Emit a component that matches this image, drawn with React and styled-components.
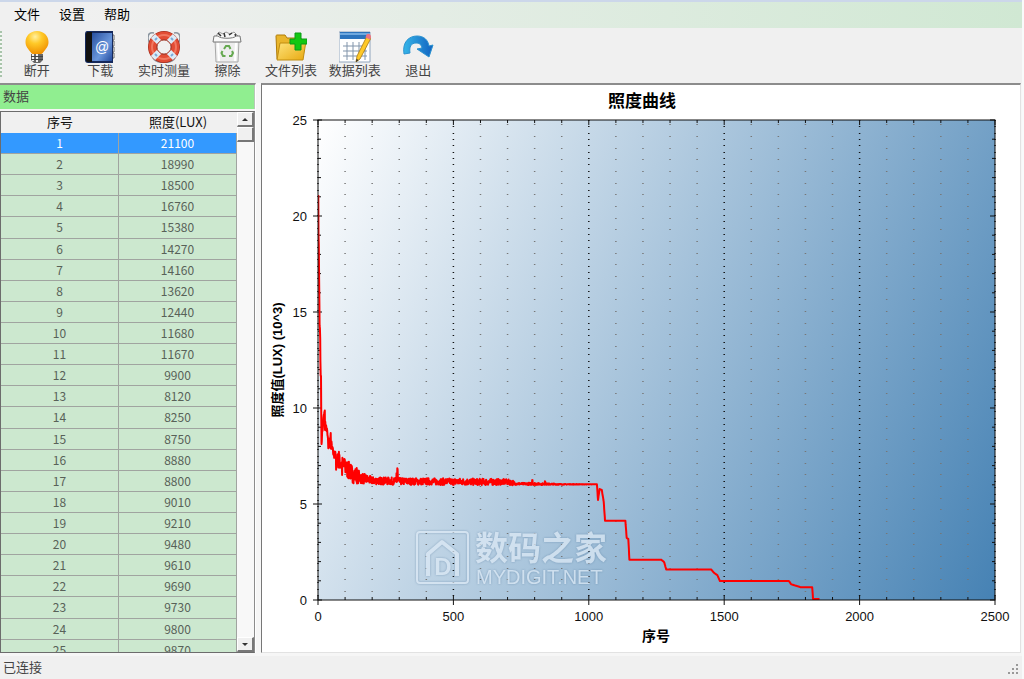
import React, { useState } from 'react';
import styled, { createGlobalStyle } from 'styled-components';

const GlobalStyle = createGlobalStyle`
  * {
    box-sizing: border-box;
  }

  body {
    margin: 0;
    background: #f0f0f0;
    color: #444;
    font-family: "Liberation Sans", "Noto Sans CJK SC", sans-serif;
    font-size: 13px;
  }

  button {
    margin: 0;
    padding: 0;
    border: 0;
    background: none;
    color: inherit;
    font: inherit;
  }
`;

const Window = styled.div`
  display: flex;
  flex-direction: column;
  height: 100vh;
  border-right: 2px solid #f8fafa;
`;

const MenuBar = styled.nav`
  display: flex;
  gap: 19px;
  padding: 0 14px;
  border-top: 2px solid #ccd7ea;
  background: linear-gradient(90deg, #f0f0f0 8%, #d0e8d3);
`;

const MenuItem = styled.button`
  height: 26px;
  color: #000;
  line-height: 24px;
`;

const ToolBar = styled.div`
  display: flex;
  height: 55px;
  padding-top: 3px;
`;

const Grip = styled.div`
  width: 5px;
  height: 46px;
  background: repeating-linear-gradient(180deg, #a9c4ab 0 2px, #f4f8f4 2px 4px);
  border-right: 3px solid #f0f0f0;
`;

const Tools = styled.div`
  display: grid;
  grid-template-columns: repeat(7, 1fr);
  width: 445px;
`;

const ToolButton = styled.button`
  display: flex;
  flex-direction: column;
  align-items: center;
  line-height: 16px;
  white-space: nowrap;

  svg {
    display: block;
    width: 32px;
    height: 32px;
  }
`;

const Workspace = styled.main`
  display: flex;
  flex: 1;
  gap: 5px;
  min-height: 0;
  padding: 0 1px 3px 0;
  background: #f6f6f6;
`;

const SidePane = styled.section`
  display: flex;
  flex: 0 0 256px;
  flex-direction: column;
  gap: 2px;
  border-top: 2px solid #8c8c8c;
  border-right: 1px solid #fff;
`;

const PaneTitle = styled.h2`
  margin: 0;
  padding: 0 3px;
  border-right: 1px solid #b8c8b8;
  background: #90ee90;
  font-size: 13px;
  font-weight: normal;
  line-height: 24px;
`;

const ListBox = styled.div`
  display: flex;
  flex: 1;
  min-height: 0;
  border: 1px solid #6c6c6c;
  border-right-color: #8c8c8c;
`;

const ListView = styled.div`
  flex: 1;
  overflow: hidden;
`;

const Table = styled.table`
  width: 100%;
  height: 549px;
  border-spacing: 0;
  table-layout: fixed;
  font-family: "Noto Sans CJK SC", sans-serif;
  text-align: center;
`;

const HeadCell = styled.th`
  height: 21px;
  padding: 0;
  background: #f0f0f0;
  color: #111;
  font-weight: normal;
  line-height: 19px;
  vertical-align: top;
`;

const Row = styled.tr`
  background: ${({ $selected }) => ($selected ? '#3399ff' : '#cce8cf')};
  color: ${({ $selected }) => ($selected ? '#fff' : '#586158')};
  cursor: default;
`;

const Cell = styled.td`
  padding: 0;
  border-right: 1px solid #a0a4a0;
  border-bottom: 1px solid #a0a4a0;
  font-size: 12px;
  line-height: 18px;
`;

const ScrollBar = styled.div`
  display: flex;
  flex-direction: column;
  width: 17px;
  background: #f8f8f8;
`;

const ScrollButton = styled.button`
  display: flex;
  align-items: center;
  justify-content: center;
  height: 15px;
  border: 1px solid #fff;
  border-right: 2px solid #777;
  border-bottom: 2px solid #777;
  background: #f0f0f0;
`;

const Arrow = styled.span`
  border: 3px solid transparent;
  border-top-width: ${({ $down }) => ($down ? '3px' : '0')};
  border-bottom-width: ${({ $down }) => ($down ? '0' : '3px')};
  border-top-color: #333;
  border-bottom-color: #333;
`;

const ScrollTrack = styled.div`
  flex: 1;
`;

const ChartPane = styled.section`
  flex: 1;
  min-width: 0;
  border: 1px solid #e2e2e2;
  border-top: 2px solid #8c8c8c;
  border-left-color: #777;
  background: #fff;
`;

const Chart = styled.svg`
  display: block;
  width: 100%;
  height: 100%;
`;

const AxisText = styled.text`
  fill: #111;
  font-size: 13px;
  text-anchor: ${({ $end }) => ($end ? 'end' : 'middle')};
`;

const ChartTitle = styled.text`
  fill: #000;
  font-size: ${({ $size }) => $size}px;
  font-weight: bold;
  text-anchor: middle;
`;

const WatermarkGroup = styled.g`
  fill: #dce9f5;
  opacity: 0.75;
  filter: drop-shadow(0 0 1px rgba(50, 90, 130, 0.5));
`;

const WatermarkText = styled.text`
  font-size: ${({ $size }) => $size}px;
  font-weight: ${({ $bold }) => ($bold ? 'bold' : 'normal')};
`;

const StatusBar = styled.footer`
  display: flex;
  align-items: flex-end;
  justify-content: space-between;
  height: 23px;
  padding: 0 3px;
  line-height: 23px;
`;

const SizeGrip = styled.svg`
  width: 12px;
  height: 12px;
  margin-bottom: 3px;
  fill: #999;
`;

const READINGS = [
  21100, 18990, 18500, 16760, 15380, 14270, 14160, 13620, 12440, 11680,
  11670, 9900, 8120, 8250, 8750, 8880, 8800, 9010, 9210, 9480,
  9610, 9690, 9730, 9800, 9870,
];

// [index, lux, noise] after the first readings, linear in between
const TREND = [
  [26, 9100, 250], [32, 8900, 300], [38, 8200, 330], [45, 8300, 380],
  [56, 7650, 200], [66, 7450, 280], [72, 7300, 400], [100, 6900, 480],
  [130, 6540, 460], [160, 6350, 290], [200, 6220, 200], [300, 6180, 180],
  [630, 6150, 170], [700, 6150, 140], [720, 6100, 130], [730, 6050, 50],
  [800, 6050, 60], [900, 6025, 20], [1030, 6025, 0], [1034, 5210, 0],
  [1040, 5780, 0], [1048, 5730, 0], [1055, 5120, 0], [1060, 4130, 0],
  [1135, 4130, 0], [1140, 3230, 0], [1146, 3180, 0], [1150, 2100, 0],
  [1267, 2100, 0], [1278, 1980, 0], [1286, 1590, 0], [1452, 1590, 0],
  [1462, 1420, 0], [1475, 1290, 0], [1484, 990, 0], [1739, 990, 0],
  [1747, 820, 0], [1784, 660, 0], [1825, 660, 0], [1828, 50, 0],
  [1852, 50, 0],
];

const SPIKES = {
  38: 7900, 47: 8700, 67: 6780, 77: 7720, 89: 6510, 99: 7300, 143: 6870,
  290: 6600, 293: 6860, 294: 6820, 791: 6250, 792: 6240, 838: 6180, 839: 6170,
};

const LEFT = 56;
const RIGHT = 733;
const TOP = 35;
const BOTTOM = 515;

const px = (index) => LEFT + (index / 2500) * (RIGHT - LEFT);
const py = (lux) => BOTTOM - (lux / 25000) * (BOTTOM - TOP);

const buildCurve = () => {
  const points = READINGS.map((lux, i) => [i + 1, lux]);
  let seed = 7;
  TREND.slice(1).forEach(([end, endLux, endNoise], n) => {
    const [start, startLux, startNoise] = TREND[n];
    for (let i = start; i < end; i += 1) {
      const t = (i - start) / (end - start);
      seed = (seed * 16807) % 2147483647;
      const noise = (startNoise + (endNoise - startNoise) * t) * ((seed / 2147483647) * 2 - 1);
      points.push([i, SPIKES[i] || startLux + (endLux - startLux) * t + noise]);
    }
  });
  points.push([1852, 50]);
  return points.map(([i, lux]) => `${px(i).toFixed(1)},${py(lux).toFixed(1)}`).join(' ');
};

const CURVE = buildCurve();

const range = (count, step) => Array.from({ length: count }, (_, i) => i * step);

const BulbIcon = () => (
  <svg viewBox="0 0 32 32">
    <defs>
      <radialGradient id="bulb" cx="42%" cy="25%" r="75%">
        <stop offset="0" stopColor="#fff0a0" />
        <stop offset="0.4" stopColor="#ffc928" />
        <stop offset="1" stopColor="#f09000" />
      </radialGradient>
    </defs>
    <path d="M16 0C9 0 4.500 5 4.500 11c0 5 3 7 5 10 1 1.500 1.500 2 3 2h7c1.500 0 2-.5 3-2 2-3 5-5 5-10C27.500 5 23 0 16 0z" fill="url(#bulb)" />
    <path d="M10 23h12v6l-3 3h-6l-3-3z" fill="#666" />
    <path d="M12 23v7M16 23v8" stroke="#f0f0f0" strokeWidth="2" />
    <path d="M10 25.500h12M10 28.500h12" stroke="#444" />
  </svg>
);

const BookIcon = () => (
  <svg viewBox="0 0 32 32">
    <defs>
      <linearGradient id="cover" x2="1" y2="1">
        <stop offset="0" stopColor="#2850a0" />
        <stop offset="0.6" stopColor="#6a97dc" />
        <stop offset="1" stopColor="#244a9c" />
      </linearGradient>
    </defs>
    <path d="M28 4h2v5h-2zM28 10h2v5h-2zM28 16h2v5h-2zM28 22h2v5h-2z" fill="#fff" stroke="#666" />
    <path d="M3 0h26v32H4c-2 0-3-1-3-3V3c0-2 1-3 2-3z" fill="#15295c" />
    <path d="M3 1h5v30H4c-1 0-2-1-2-2V3z" fill="#111" />
    <path d="M8 2h20v28H8z" fill="url(#cover)" />
    <text x="18" y="21" textAnchor="middle" fontSize="14" fill="#fff">@</text>
  </svg>
);

const LifebuoyIcon = () => (
  <svg viewBox="0 0 32 32">
    <path d="M6 2C2 1 0 3 0 7c0 2 1 4 2 6M26 2c4-1 6 1 6 5 0 2-1 4-2 6M5 27c4 6 18 6 22 0" fill="none" stroke="#8c96a0" strokeWidth="1.500" />
    <circle cx="16" cy="16" r="11.500" fill="none" stroke="#a83020" strokeWidth="9" />
    <circle cx="16" cy="16" r="11.500" fill="none" stroke="#e24c34" strokeWidth="7.500" />
    <circle cx="16" cy="16" r="12" fill="none" stroke="#f07860" strokeWidth="2" />
    <g fill="none" stroke="#dcecf8" strokeWidth="6">
      <path d="M5 5l6 6M27 5l-6 6M5 27l6-6M27 27l-6-6" />
    </g>
    <path d="M9 7l-2 2M23 7l2 2M9 25l-2-2M23 25l2-2" stroke="#7caad8" strokeWidth="2" />
    <circle cx="16" cy="16" r="7" fill="#f0f0f0" stroke="#a84a3c" />
  </svg>
);

const BinIcon = () => (
  <svg viewBox="0 0 32 32">
    <path d="M5 5l3-4 4 2 3-2 4 2 4-2 4 4v4H5z" fill="#f8f8f8" stroke="#999" />
    <path d="M7 2l3 3M13 2l1 4M18 4l3-2M24 3l1 3" stroke="#333" strokeWidth="1.500" />
    <path d="M4 9h24l-1 22H5z" fill="#ededed" stroke="#a8a8a8" />
    <path d="M7 12l1 18M25 12l-1 18" stroke="#fff" strokeWidth="2" />
    <path d="M3 5h4c2 3 16 3 18 0h4l1 6H2z" fill="#fafafa" stroke="#777" />
    <g fill="none" stroke="#65a850" strokeWidth="2">
      <path d="M13 18l2-3h3l1.500 3" />
      <path d="M21 20l1 2-1.500 3H18" />
      <path d="M14.500 25H12l-1.500-3 1-2" />
    </g>
  </svg>
);

const FolderIcon = () => (
  <svg viewBox="0 0 32 32">
    <defs>
      <linearGradient id="folder" x2="1" y2="1">
        <stop offset="0" stopColor="#ffe680" />
        <stop offset="1" stopColor="#e8a910" />
      </linearGradient>
    </defs>
    <path d="M1 5c0-1 1-1 1-1h8l2 3h14v21H2z" fill="#e9b52c" stroke="#b07c08" />
    <path d="M5 12h9l3-2h14l-3 19H2z" fill="url(#folder)" stroke="#c08c10" />
    <path d="M20 2h6v6h6v5h-6v6h-6v-6h-5V8h5z" fill="#12c812" stroke="#0b9a16" />
  </svg>
);

const TableIcon = () => (
  <svg viewBox="0 0 32 32">
    <path d="M0 1h31v30H0z" fill="#fff" stroke="#90a4bc" />
    <path d="M1 1h30v7H1z" fill="#2d74bd" />
    <path d="M1 2h30v2H1z" fill="#70a9df" />
    <path d="M4 15h24M4 20h24M4 25h24M8 11v18M14 11v18M20 11v18M26 11v18" stroke="#8194aa" />
    <path d="M28 5l4 2-11 21-4 3 1-6z" fill="#ffc928" stroke="#a87814" strokeWidth="0.800" />
    <path d="M27.500 3.500c2-2 5 0 4.500 3l-1 2-4.500-2z" fill="#e97484" />
    <path d="M17 31l.5-3 2 1z" fill="#222" />
  </svg>
);

const ExitIcon = () => (
  <svg viewBox="0 0 32 32">
    <defs>
      <linearGradient id="exit" x2="1" y2="0">
        <stop offset="0" stopColor="#35b5e8" />
        <stop offset="1" stopColor="#1262c0" />
      </linearGradient>
    </defs>
    <path d="M2 23C0 11 7 5 15 5c7 0 11 4 12 10l4-1-4 12-12-8 5-1c-1-4-3-5-6-5-5 0-7 4-6 10z" fill="url(#exit)" stroke="#2a92d0" />
  </svg>
);

const TOOLS = [
  ['断开', BulbIcon],
  ['下载', BookIcon],
  ['实时测量', LifebuoyIcon],
  ['擦除', BinIcon],
  ['文件列表', FolderIcon],
  ['数据列表', TableIcon],
  ['退出', ExitIcon],
];

const Watermark = () => (
  <WatermarkGroup>
    <g fill="none" stroke="#dce9f5">
      <rect x="155" y="447" width="51" height="51" rx="3" strokeWidth="2" />
      <path d="M166 491v-22l14-12 15 12v22" strokeWidth="4" strokeLinejoin="round" />
    </g>
    <text x="181" y="490" textAnchor="middle" fontSize="24" fontWeight="bold">D</text>
    <WatermarkText x="213" y="475" $size={33} $bold>数码之家</WatermarkText>
    <WatermarkText x="214" y="499" $size={20}>MYDIGIT.NET</WatermarkText>
  </WatermarkGroup>
);

const LuxChart = () => (
  <Chart viewBox="0 0 758 567" role="img" aria-label="照度曲线">
    <defs>
      <linearGradient id="plot" gradientUnits="userSpaceOnUse" x1={LEFT} y1={TOP} x2="797" y2="374">
        <stop offset="0" stopColor="#fff" />
        <stop offset="1" stopColor="#4682b4" />
      </linearGradient>
      <clipPath id="area">
        <rect x={LEFT} y={TOP} width={RIGHT - LEFT} height={BOTTOM - TOP} />
      </clipPath>
    </defs>

    <ChartTitle x="380" y="22" $size={17}>照度曲线</ChartTitle>
    <rect x={LEFT} y={TOP} width={RIGHT - LEFT} height={BOTTOM - TOP} fill="url(#plot)" />

    {range(26, 100).map((v) => (
      <g key={v} stroke="#111">
        {v % 500 === 0 ? (
          <>
            <path d={`M${px(v)} ${TOP}v${BOTTOM - TOP}`} strokeWidth="1.500" strokeDasharray="1 5 1 6 1 5" />
            <path d={`M${px(v)} ${TOP}v5M${px(v)} ${BOTTOM - 4}v9`} />
          </>
        ) : (
          <>
            <path d={`M${px(v)} ${TOP + 4}v${BOTTOM - TOP - 4}`} stroke="#777" strokeWidth="1.500" strokeDasharray="1 11 1 11 1 10" />
            <path d={`M${px(v)} ${TOP}v3M${px(v)} ${BOTTOM}v-3`} />
          </>
        )}
      </g>
    ))}
    {range(26, 1000).map((v) => (
      <path
        key={v}
        d={v % 5000 === 0
          ? `M${LEFT - 5} ${py(v)}h9M${RIGHT} ${py(v)}h-5`
          : `M${LEFT} ${py(v)}h3M${RIGHT} ${py(v)}h-3`}
        stroke="#111"
      />
    ))}

    <polyline points={CURVE} fill="none" stroke="#f00" strokeWidth="2" strokeLinejoin="round" clipPath="url(#area)" />
    <rect x={LEFT} y={TOP} width={RIGHT - LEFT} height={BOTTOM - TOP} fill="none" stroke="#111" />

    {range(6, 5).map((v) => (
      <AxisText key={v} x="45" y={py(v * 1000) + 5} $end>{v}</AxisText>
    ))}
    {range(6, 500).map((v) => (
      <AxisText key={v} x={px(v)} y="536">{v}</AxisText>
    ))}
    <ChartTitle x="394" y="556" $size={14}>序号</ChartTitle>
    <ChartTitle transform="translate(20 275) rotate(-90)" $size={13}>照度值(LUX) (10^3)</ChartTitle>
    <Watermark />
  </Chart>
);

const DataList = () => {
  const [selected, setSelected] = useState(0);

  return (
    <ListBox>
      <ListView>
        <Table>
          <thead>
            <tr>
              <HeadCell scope="col">序号</HeadCell>
              <HeadCell scope="col">照度(LUX)</HeadCell>
            </tr>
          </thead>
          <tbody>
            {READINGS.map((lux, i) => (
              <Row key={lux} $selected={i === selected} onClick={() => setSelected(i)}>
                <Cell>{i + 1}</Cell>
                <Cell>{lux}</Cell>
              </Row>
            ))}
          </tbody>
        </Table>
      </ListView>
      <ScrollBar>
        <ScrollButton aria-label="向上"><Arrow /></ScrollButton>
        <ScrollButton aria-label="滚动" />
        <ScrollTrack />
        <ScrollButton aria-label="向下"><Arrow $down /></ScrollButton>
      </ScrollBar>
    </ListBox>
  );
};

const App = () => (
  <Window>
    <GlobalStyle />
    <MenuBar>
      {['文件', '设置', '帮助'].map((label) => (
        <MenuItem key={label}>{label}</MenuItem>
      ))}
    </MenuBar>
    <ToolBar>
      <Grip />
      <Tools>
        {TOOLS.map(([label, Icon]) => (
          <ToolButton key={label}>
            <Icon />
            {label}
          </ToolButton>
        ))}
      </Tools>
    </ToolBar>
    <Workspace>
      <SidePane>
        <PaneTitle>数据</PaneTitle>
        <DataList />
      </SidePane>
      <ChartPane>
        <LuxChart />
      </ChartPane>
    </Workspace>
    <StatusBar>
      <span>已连接</span>
      <SizeGrip viewBox="0 0 12 12">
        <path d="M9 0h2v2H9zM5 4h2v2H5zM9 4h2v2H9zM1 8h2v2H1zM5 8h2v2H5zM9 8h2v2H9z" />
      </SizeGrip>
    </StatusBar>
  </Window>
);

export default App;
